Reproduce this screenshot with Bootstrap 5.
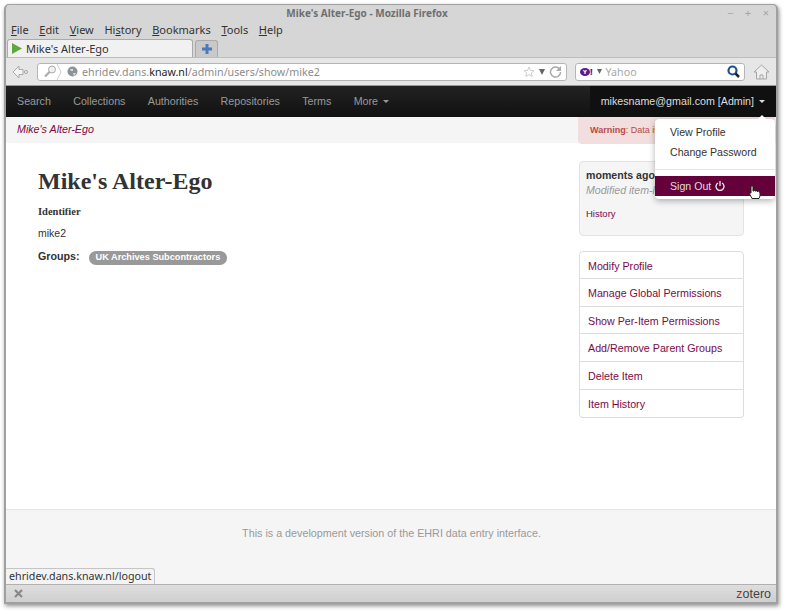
<!DOCTYPE html>
<html lang="en">
<head>
<meta charset="UTF-8">
<meta name="viewport" content="width=device-width, initial-scale=1.0">
<title>Mike's Alter-Ego - Mozilla Firefox</title>
<link rel="stylesheet" href="https://cdn.jsdelivr.net/npm/bootstrap@5.3.0/dist/css/bootstrap.min.css">
<style>
  html, body { height: 100%; }
  body { background: #fff; font-family: "Liberation Sans", Arial, sans-serif; font-size: 12px; color: #333; overflow: hidden; }
  .win { width: 774px; height: 600px; margin: 4px 0 0 4px; border: 1px solid #a0a0a0; border-width: 1px 2px 2px 2px; border-radius: 5px 5px 0 0; background: #d6d6d6; box-shadow: 1px 2px 4px rgba(0,0,0,.45); position: relative; overflow: hidden; }
  .titlebar { height: 17px; padding-right: 48px; font-size: 10px; font-weight: 700; color: #6f6f6f; position: relative; text-align: center; line-height: 16px; font-family: "Noto Sans", sans-serif; }
  .winbtns { position: absolute; right: 7px; top: 0; width: 42px; color: #a5a5a5; font-size: 11px; font-weight: 400; }
  .menubar { height: 17px; padding-left: 5px; font-size: 11px; color: #333; line-height: 15px; font-family: "Noto Sans", sans-serif; }
  .menubar span { margin-right: 10.700px; }
  .menubar u { text-underline-offset: 1px; }
  .tabrow { height: 18px; padding-left: 1px; align-items: flex-end; }
  .ftab { width: 186px; height: 18px; background: #f1f1f1; border: 1px solid #aaa; border-bottom: 0; border-radius: 3px 3px 0 0; font-size: 11px; line-height: 17px; padding-left: 4px; font-family: "Noto Sans", sans-serif; color: #333; }
  .newtab { width: 23px; height: 17px; margin-left: 2px; background: #c9c9c9; border: 1px solid #aaa; border-bottom: 0; border-radius: 3px 3px 0 0; }
  .urlrow { height: 29px; background: #e6e6e6; border-top: 1px solid #bdbdbd; padding: 0 2px 0 6px; border-bottom: 1px solid #999; }
  .urlbox { width: 530px; height: 18px; background: #fff; border: 1px solid #b5b5b5; border-radius: 3px; font-size: 10.700px; color: #8c8c8c; line-height: 16px; margin-left: 8px; font-family: "Noto Sans", sans-serif; }
  .urlbox b { font-weight: 400; color: #222; }
  .searchbox { width: 170px; height: 18px; background: #fff; border: 1px solid #b5b5b5; border-radius: 3px; margin-left: 8px; font-size: 10.700px; color: #a8a8a8; line-height: 16px; font-family: "Noto Sans", sans-serif; }
  .yh { color: #5b1a8e; font-weight: 800; font-size: 9px; line-height: 9px; }
  .yh i { display: inline-block; width: 10px; height: 8px; line-height: 8px; border-radius: 50%; background: #5b1a8e; color: #fff; font-style: normal; font-size: 6px; text-align: center; vertical-align: 1px; }
  .page { height: 498px; background: #fff; position: relative; font-family: "Liberation Sans", Arial, sans-serif; }
  .topnav { height: 31px; padding: 0; background: linear-gradient(#222, #111); font-size: 10.700px; color: #999; flex-wrap: nowrap; justify-content: flex-start; }
  .topnav .lnk { margin-left: 11px; margin-right: 11.300px; }
  .topnav .who { background: #101010; color: #ddd; height: 31px; line-height: 31px; padding: 0 11px 0 11px; }
  .arrow { display: inline-block; width: 0; height: 0; border: 3px solid transparent; border-top-color: currentColor; border-bottom: 0; vertical-align: 2px; margin-left: 2px; }
  .crumbs { height: 26px; background: #f5f5f5; font-size: 10.700px; padding-left: 11px; line-height: 25px; position: relative; }
  .crumbs i { color: #7b0a46; }
  .warnbox { position: absolute; left: 572px; top: 0; width: 197px; height: 27px; background: #f2dede; color: #b94a48; border-radius: 0 0 4px 4px; font-size: 9px; line-height: 26px; padding-left: 12px; }
  .mainrow { height: 366px; }
  .leftcol { width: 573px; padding: 23px 0 0 32px; }
  .leftcol h1 { font-family: "Liberation Serif", serif; font-weight: 700; font-size: 24px; line-height: 30px; margin: 0 0 9px; color: #333; }
  .leftcol h5 { font-family: "Liberation Serif", serif; font-weight: 700; font-size: 10.500px; margin: 0 0 7px; line-height: 14px; color: #333; }
  .leftcol p { font-size: 10.500px; margin: 0 0 8px; line-height: 15px; }
  .grp { font-size: 10.700px; font-weight: 700; line-height: 15px; }
  .pill.badge { background: #999; color: #fff; font-size: 9.200px; font-weight: 700; padding: 2px 7px; margin-left: 6px; line-height: 9.500px; vertical-align: 0; }
  .rightcol { width: 165px; padding-top: 18px; }
  .wellbox { height: 75px; background: #f5f5f5; border: 1px solid #e3e3e3; border-radius: 4px; padding: 6px 6px; margin-bottom: 15px; font-size: 10.600px; line-height: 15px; white-space: nowrap; overflow: hidden; }
  .wellbox em { color: #999; }
  .wellbox a { display: block; font-size: 9.500px; margin-top: 8px; color: #7b0a46; text-decoration: none; }
  .sidelist.list-group { --bs-list-group-border-color: #ddd; --bs-list-group-border-radius: 4px; }
  .sidelist .list-group-item { height: 27.800px; line-height: 28px; padding: 0 0 0 8px; color: #7b0a46; font-size: 10.700px; }
  .foot { height: 75px; background: #f5f5f5; border-top: 1px solid #e5e5e5; text-align: center; color: #999; font-size: 10.750px; padding-top: 15px; padding-left: 1px; }
  .usermenu { position: absolute; left: 649px; top: 33px; width: 120px; height: 80px; background: #fff; border-radius: 4px; box-shadow: 0 2px 6px rgba(0,0,0,.3); font-size: 10.600px; padding-top: 3px; color: #333; }
  .usermenu::before { content: ""; position: absolute; right: 9px; top: -4px; border: 4px solid transparent; border-top: 0; border-bottom-color: #fff; }
  .usermenu div { padding-left: 15px; line-height: 20px; }
  .usermenu hr { margin: 7px 0 6px; border: 0; border-top: 1px solid #e5e5e5; opacity: 1; }
  .usermenu .sel { background: #66003a; color: #ddd; height: 20px; }
  .cursor { position: absolute; left: 742px; top: 99px; }
  .statusbar { height: 18px; background: linear-gradient(#dedede, #cfcfcf); border-top: 1px solid #b0b0b0; }
  .statustip { position: absolute; left: 0; bottom: 0; height: 16px; background: #f3f3f3; border: 1px solid #c5c5c5; border-left: 0; border-bottom: 0; border-radius: 0 3px 0 0; padding: 0 3px; font-size: 10.700px; line-height: 15px; color: #333; font-family: "Noto Sans", sans-serif; }
  .zot { font-size: 12.500px; color: #444; margin-right: 5px; line-height: 14px; }
  .zot span { color: #c02020; }
  .globe { margin: 0 4px 0 5px; }
</style>
</head>
<body>
<div class="win">
  <div class="titlebar">Mike's Alter-Ego - Mozilla Firefox
    <span class="winbtns d-flex justify-content-between"><span>−</span><span>+</span><span>×</span></span>
  </div>
  <div class="menubar"><span><u>F</u>ile</span><span><u>E</u>dit</span><span><u>V</u>iew</span><span>Hi<u>s</u>tory</span><span><u>B</u>ookmarks</span><span><u>T</u>ools</span><span><u>H</u>elp</span></div>
  <div class="tabrow d-flex">
    <div class="ftab d-flex align-items-center gap-1">
      <svg width="10" height="11" viewBox="0 0 10 11"><path d="M0 0L10 5.500L0 11Z" fill="#5fa83a"/></svg>Mike's Alter-Ego
    </div>
    <div class="newtab d-flex align-items-center justify-content-center">
      <svg width="10" height="10" viewBox="0 0 10 10"><path d="M3.500 0h3v3.500H10v3H6.500V10h-3V6.500H0v-3h3.500z" fill="#4a7ab8"/></svg>
    </div>
  </div>
  <div class="urlrow d-flex align-items-center">
    <svg width="17" height="14" viewBox="0 0 17 14"><path d="M7 1L1 7l6 6V9.500h4v-5H7z" fill="#f4f4f4" stroke="#aaa"/><circle cx="14" cy="7" r="1.600" fill="none" stroke="#aaa"/></svg>
    <div class="urlbox d-flex align-items-center">
      <svg class="ms-1" width="20" height="16" viewBox="0 0 20 16"><circle cx="10" cy="5.500" r="3.500" fill="#f0f0f0" stroke="#aaa"/><path d="M7.500 8L3 12.500" stroke="#aaa" stroke-width="2.200"/><path d="M15 0l4 8-4 8" fill="none" stroke="#ccc"/></svg>
      <svg class="globe" width="11" height="11" viewBox="0 0 11 11"><circle cx="5.500" cy="5.500" r="5" fill="#8d9498"/><path d="M3 3h3v2H4zM6 7h3l-2 3z" fill="#ddd"/></svg>
      <span>ehridev.dans.<b>knaw.nl</b>/admin/users/show/mike2</span>
      <span class="ms-auto d-flex align-items-center me-1 gap-1">
        <svg width="12" height="12" viewBox="0 0 12 12"><path d="M6 1l1.500 3.400 3.500.3-2.700 2.300.9 3.500L6 8.600 2.800 10.500l.9-3.500L1 4.700l3.500-.3z" fill="none" stroke="#ccc"/></svg>
        <svg width="6" height="6" viewBox="0 0 6 6"><path d="M0 0h6L3 6z" fill="#666"/></svg>
        <svg width="13" height="13" viewBox="0 0 13 13"><path d="M10.500 4A5 5 0 1 0 11.500 7" fill="none" stroke="#aaa" stroke-width="1.500"/><path d="M7 6h5V1z" fill="#aaa"/></svg>
      </span>
    </div>
    <div class="searchbox d-flex align-items-center">
      <span class="yh ms-1"><i>Y</i>!</span>
      <svg class="ms-1 me-1" width="5" height="5" viewBox="0 0 5 5"><path d="M0 0h5L2.500 5z" fill="#666"/></svg>
      <span>Yahoo</span>
      <svg class="ms-auto me-1" width="13" height="13" viewBox="0 0 13 13"><circle cx="5.500" cy="5.500" r="4" fill="#fff" stroke="#20508f" stroke-width="2.200"/><path d="M8.500 8.500L12 12" stroke="#222" stroke-width="2.500"/></svg>
    </div>
    <svg class="ms-2" width="17" height="16" viewBox="0 0 17 16"><path d="M1 8l7.500-7L16 8l-2.500 0v7h-10V8z" fill="#eee" stroke="#a5a5a5"/><path d="M7 15v-4h3v4" fill="none" stroke="#a5a5a5"/></svg>
  </div>
  <div class="page">
    <nav class="navbar topnav d-flex align-items-center">
      <span class="lnk">Search</span><span class="lnk">Collections</span><span class="lnk">Authorities</span><span class="lnk">Repositories</span><span class="lnk">Terms</span><span class="lnk">More <span class="arrow"></span></span>
      <span class="who ms-auto">mikesname@gmail.com [Admin] <span class="arrow"></span></span>
    </nav>
    <div class="crumbs"><i>Mike's Alter-Ego</i><div class="warnbox"><b>Warning</b>: Data is</div></div>
    <div class="mainrow d-flex">
      <div class="leftcol">
        <h1>Mike's Alter-Ego</h1>
        <h5>Identifier</h5>
        <p>mike2</p>
        <div class="grp">Groups: <span class="pill badge rounded-pill">UK Archives Subcontractors</span></div>
      </div>
      <div class="rightcol">
        <div class="wellbox"><b>moments ago</b><br><em>Modified item-level</em><a href="#">History</a></div>
        <div class="sidelist list-group">
          <a class="list-group-item" href="#">Modify Profile</a>
          <a class="list-group-item" href="#">Manage Global Permissions</a>
          <a class="list-group-item" href="#">Show Per-Item Permissions</a>
          <a class="list-group-item" href="#">Add/Remove Parent Groups</a>
          <a class="list-group-item" href="#">Delete Item</a>
          <a class="list-group-item" href="#">Item History</a>
        </div>
      </div>
    </div>
    <div class="foot">This is a development version of the EHRI data entry interface.</div>
    <div class="usermenu">
      <div>View Profile</div>
      <div>Change Password</div>
      <hr>
      <div class="sel d-flex align-items-center gap-1">Sign Out
        <svg width="10" height="10" viewBox="0 0 10 10"><path d="M3 2A4 4 0 1 0 7 2M5 0v5" fill="none" stroke="#eee" stroke-width="1.300"/></svg>
      </div>
    </div>
    <svg class="cursor" width="13" height="14" viewBox="0 0 13 14"><path d="M3 1h2v5h1V5h1v1h1V5.500h1V6.500h1V6h1l1 2v3l-1 2.500H4L1 8h2z" fill="#fff" stroke="#222"/></svg>
    <div class="statustip">ehridev.dans.knaw.nl/logout</div>
  </div>
  <div class="statusbar d-flex align-items-center justify-content-between">
    <svg class="ms-2" width="9" height="9" viewBox="0 0 9 9"><path d="M1 1l7 7M8 1L1 8" stroke="#888" stroke-width="2.200"/></svg>
    <span class="zot"><span>z</span>otero</span>
  </div>
</div>
<script src="https://cdn.jsdelivr.net/npm/bootstrap@5.3.0/dist/js/bootstrap.bundle.min.js"></script>
</body>
</html>
